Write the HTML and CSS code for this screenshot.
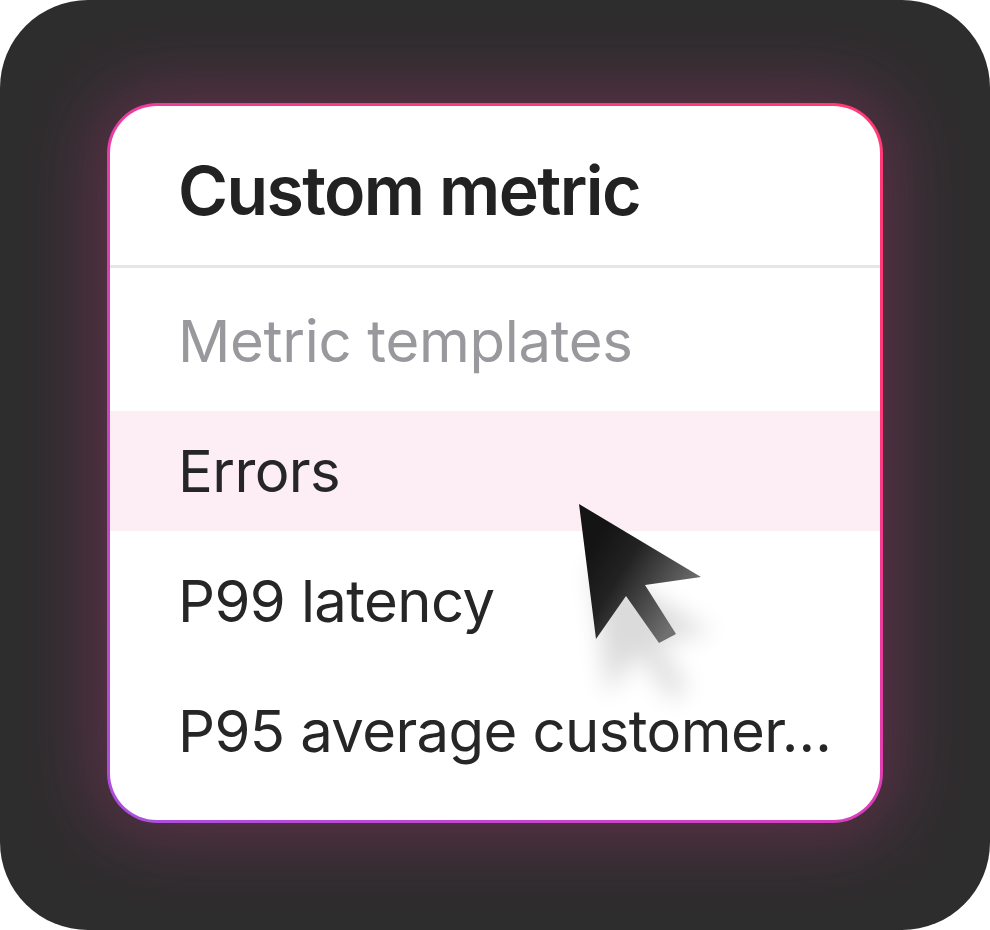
FILE: index.html
```html
<!doctype html>
<html lang="en">
  <head>
    <meta charset="UTF-8" />
    <meta name="viewport" content="width=device-width, initial-scale=1.0" />
    <title>Custom metric</title>
    <link rel="stylesheet" href="styles.css">
  </head>
  <body>
    <div class="frame">
      <div class="menu">
        <div class="menu-header">
          <h1>Custom metric</h1>
        </div>
        <ul class="menu-list">
          <li class="menu-label">Metric templates</li>
          <li class="menu-item active">Errors</li>
          <li class="menu-item">P99 latency</li>
          <li class="menu-item">P95 average customer…</li>
        </ul>

        <!-- pointer over the hovered row -->
        <svg class="pointer" width="200" height="240" viewBox="0 0 200 240">
          <defs>
            <linearGradient id="arrowFill" x1="0.15" y1="0.25" x2="0.85" y2="0.75">
              <stop offset="0" stop-color="#141414" />
              <stop offset="0.35" stop-color="#222222" />
              <stop offset="1" stop-color="#707070" />
            </linearGradient>
            <filter id="arrowShadow" x="-50%" y="-50%" width="200%" height="200%">
              <feGaussianBlur stdDeviation="12" />
            </filter>
          </defs>
          <polygon points="32,70 154,143 98,151 129,200 112,209 79,162 49,205" fill="#000" opacity="0.14" filter="url(#arrowShadow)" />
          <polygon points="20,14 142,87 86,95 117,144 100,153 67,106 37,149" fill="url(#arrowFill)" />
        </svg>
      </div>
    </div>
  </body>
</html>
```

FILE: styles.css
```css
body { margin: 0; background: #fff; font-family: Inter, "Noto Sans", sans-serif; }

.frame {
  width: 990px;
  height: 930px;
  box-sizing: border-box;
  padding-top: 103px;
  background: #2e2d2e;
  border-radius: 88px;
  display: flex;
  justify-content: center;
  align-items: flex-start;
}

/* --- Menu card --- */
.menu {
  position: relative;
  width: 776px;
  height: 720px;
  box-sizing: border-box;
  border: 3px solid transparent;
  border-radius: 50px;
  background:
    linear-gradient(#fff, #fff) padding-box,
    linear-gradient(35deg, #a94fe0 0%, #d83fc0 40%, #ff3a7c 75%, #ff3a74 100%) border-box;
  box-shadow: 0 0 70px 12px rgba(230, 60, 150, 0.28);
}
.menu-header {
  height: 162px;
  box-sizing: border-box;
  display: flex;
  align-items: center;
  padding: 8px 0 0 68px;
  border-bottom: 3px solid #e6e6e6;
}
.menu-header h1 {
  margin: 0;
  font-size: 68px;
  font-weight: 600;
  letter-spacing: -1.6px;
  color: #222;
}
.menu-list {
  list-style: none;
  margin: 0;
  padding: 13px 0 0;
  display: flex;
  flex-direction: column;
  gap: 10px;
}
.menu-list li {
  height: 120px;
  display: flex;
  align-items: center;
  padding: 0 50px 0 68px;
  font-size: 58px;
  letter-spacing: -0.6px;
  color: #262626;
  white-space: nowrap;
  overflow: hidden;
  text-overflow: ellipsis;
}
.menu-list .menu-label { color: #98989d; letter-spacing: -0.3px; }
.menu-item.active { background: #fdedf4; }

.pointer {
  position: absolute;
  left: 449px;
  top: 384px;
}
```
